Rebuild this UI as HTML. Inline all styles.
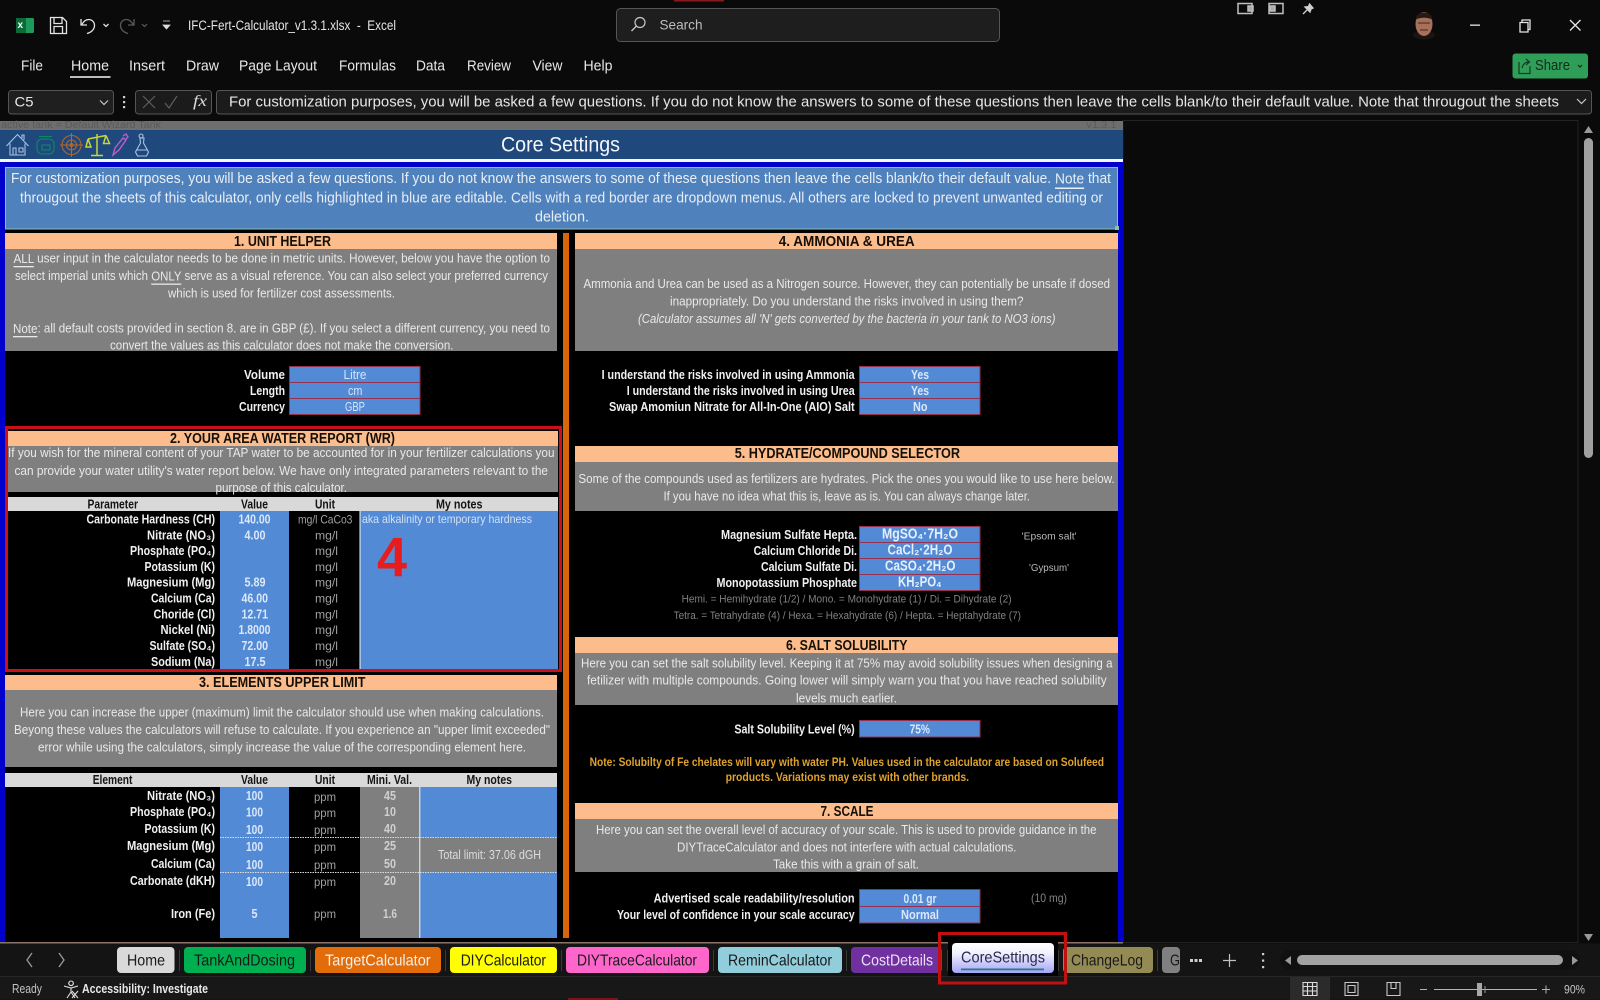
<!DOCTYPE html>
<html><head><meta charset="utf-8"><title>IFC-Fert-Calculator</title>
<style>
html,body{margin:0;padding:0;background:#0a0a0a;width:1600px;height:1000px;overflow:hidden}
svg{display:block;filter:blur(.3px)}
text{font-family:"Liberation Sans",sans-serif;dominant-baseline:central;white-space:pre}
.b{font-size:13px;fill:#e9e9e9}
.i{font-size:15px;fill:#e8eef6}
.h{font-size:14.5px;font-weight:bold;fill:#141008}
.l{font-size:12.5px;font-weight:bold;fill:#f0f0f0}
.v{font-size:12.5px;font-weight:bold;fill:#dce8fa}
.iv{font-size:12.5px;fill:#d4e4fa}
.u{font-size:12px;fill:#a0a0a0}
.m{font-size:12.5px;fill:#d0d0d0;font-weight:bold}
.t{font-size:12.5px;font-weight:bold;fill:#141414}
.f{font-size:14.5px;font-weight:bold;fill:#e6f0fc}
.c{font-size:10.5px;fill:#b8b8b8}
.s{font-size:11px;fill:#808080}
.o{font-size:12px;font-weight:bold;fill:#dfa22c}
.n{font-size:14.5px;fill:#e8e8e8}
.tb{font-size:16px;fill:#1a1a1a}
.in{fill:#538ad6;stroke:#96304f;stroke-width:1}
.ic{fill:none;stroke:#e4e4e4;stroke-width:1.3}
</style></head><body>
<svg width="1600" height="1000" viewBox="0 0 1600 1000" xmlns="http://www.w3.org/2000/svg">
<rect width="1600" height="1000" fill="#0a0a0a"/>
<rect x="674" y="0" width="50" height="1.5" fill="#8a1a1a"/>

<!-- title bar -->
<rect x="16" y="18" width="18" height="15" rx="1.5" fill="#1b9a5a"/>
<rect x="16" y="18" width="10" height="15" fill="#0c6a38"/>
<text x="17.5" y="25.5" style="font-size:10px;font-weight:bold;fill:#fff">x</text>
<path class="ic" d="M50.5 17.5h12l4 4v12h-16zM54 17.5v6h8v-6M54 33.5v-7h8.5v7"/>
<path class="ic" d="M81 19v6h6M81.5 25c2-3.5 4-5.5 7-5.5 3.500 0 6 2.500 6 6s-3 7-7.500 8"/>
<path class="ic" d="M103.500 24l2.500 2.500 2.500-2.500"/>
<path d="M134 19v6h-6M133.500 25c-2-3.500-4-5.500-7-5.500-3.500 0-6 2.500-6 6s3 7 7.500 8" fill="none" stroke="#5a5a5a" stroke-width="1.300"/>
<path d="M142 24l2.500 2.500 2.500-2.500" fill="none" stroke="#5a5a5a" stroke-width="1.200"/>
<path d="M163 21h7M163 25h7l-3.500 4z" fill="#ddd" stroke="#ddd" stroke-width=".8"/>
<text x="188" y="25.500" textLength="208" lengthAdjust="spacingAndGlyphs" style="font-size:13.500px;fill:#e6e6e6">IFC-Fert-Calculator_v1.3.1.xlsx  -  Excel</text>
<rect x="616.500" y="8.500" width="383" height="33" rx="4" fill="#1e1e1e" stroke="#555"/>
<circle cx="640" cy="22.500" r="5" fill="none" stroke="#c8c8c8" stroke-width="1.200"/><path d="M636.500 26l-5 5" stroke="#c8c8c8" stroke-width="1.300"/>
<text x="659.500" y="24.500" textLength="43" lengthAdjust="spacingAndGlyphs" style="font-size:14px;fill:#bdbdbd">Search</text>
<g fill="none" stroke="#c0c0c0" stroke-width="1.500"><rect x="1238" y="3.500" width="14" height="10"/><rect x="1248" y="6" width="5" height="5" fill="#aaa"/><rect x="1269" y="3.500" width="14" height="10"/><rect x="1270" y="6" width="5" height="5" fill="#aaa"/></g>
<path d="M1303 14l4-4M1305 7l5 5 1-3 2-1-3.500-4-1 2.500z" stroke="#cfcfcf" stroke-width="1.300" fill="#cfcfcf"/>
<!-- avatar -->
<ellipse cx="1424" cy="35" rx="11" ry="4.500" fill="#1a1412"/>
<ellipse cx="1424" cy="24" rx="8.500" ry="12" fill="#a87058"/>
<path d="M1415.500 20c0-10 17-10 17 0-3-3-14-3-17 0z" fill="#241a16"/>
<path d="M1418 23h4.500M1425.500 23h4.500M1422.500 23h3M1420 30h8" stroke="#3c2a24" stroke-width="1.100"/>
<rect x="1470" y="24.500" width="10" height="1.300" fill="#e6e6e6"/>
<path class="ic" d="M1520 22.500h8v9.500h-8zM1522 22.500v-2.500h8v9.500h-2"/>
<path d="M1570 20l10.500 10.500M1580.500 20l-10.500 10.500" stroke="#e6e6e6" stroke-width="1.300"/>

<!-- menu -->
<text x="21" y="66.500" textLength="22" lengthAdjust="spacingAndGlyphs" class="n">File</text>
<text x="71" y="66.500" textLength="38" lengthAdjust="spacingAndGlyphs" class="n">Home</text>
<text x="129" y="66.500" textLength="36" lengthAdjust="spacingAndGlyphs" class="n">Insert</text>
<text x="186" y="66.500" textLength="33" lengthAdjust="spacingAndGlyphs" class="n">Draw</text>
<text x="239" y="66.500" textLength="78" lengthAdjust="spacingAndGlyphs" class="n">Page Layout</text>
<text x="339" y="66.500" textLength="57" lengthAdjust="spacingAndGlyphs" class="n">Formulas</text>
<text x="416" y="66.500" textLength="29" lengthAdjust="spacingAndGlyphs" class="n">Data</text>
<text x="467" y="66.500" textLength="44" lengthAdjust="spacingAndGlyphs" class="n">Review</text>
<text x="532.500" y="66.500" textLength="30" lengthAdjust="spacingAndGlyphs" class="n">View</text>
<text x="583.500" y="66.500" textLength="29" lengthAdjust="spacingAndGlyphs" class="n">Help</text>
<rect x="70" y="76" width="40.500" height="2" fill="#bdbdbd"/>
<rect x="1512.500" y="53.500" width="75.500" height="25" rx="3" fill="#2f9e59"/>
<path d="M1519 62v11.500h11V66M1522 68c1-4 3-6 7-6M1526 59l3.500 3-3.500 3" fill="none" stroke="#143c22" stroke-width="1.200"/>
<text x="1535" y="65.500" textLength="35" lengthAdjust="spacingAndGlyphs" style="fill:#102c18;font-size:15px">Share</text>
<path d="M1578 65l2 2 2-2" fill="none" stroke="#102c18" stroke-width="1.200"/>

<!-- formula bar -->
<rect x="8.500" y="90.500" width="105" height="23.500" rx="3" fill="#1f1f1f" stroke="#555"/>
<text x="14.500" y="101.500" textLength="19" lengthAdjust="spacingAndGlyphs" style="font-size:14px;fill:#e8e8e8">C5</text>
<path d="M100 100.500l4 4 4-4" fill="none" stroke="#c8c8c8" stroke-width="1.200"/>
<g fill="#d0d0d0"><rect x="123" y="96" width="2.200" height="2.200"/><rect x="123" y="101" width="2.200" height="2.200"/><rect x="123" y="106" width="2.200" height="2.200"/></g>
<rect x="135.500" y="90.500" width="76" height="23.500" rx="3" fill="#1b1b1b" stroke="#555"/>
<path d="M143 96l12 12M155 96l-12 12M165 103l4 5 8-12" fill="none" stroke="#5e5e5e" stroke-width="1.200"/>
<text x="193" y="101.500" textLength="14" lengthAdjust="spacingAndGlyphs" style="font-family:'Liberation Serif',serif;font-style:italic;font-size:16px;fill:#dcdcdc">fx</text>
<rect x="216.500" y="90.500" width="1375" height="23.500" rx="3" fill="#1b1b1b" stroke="#555"/>
<text x="229" y="102" textLength="1330" lengthAdjust="spacingAndGlyphs" style="font-size:15px;fill:#e6e6e6">For customization purposes, you will be asked a few questions. If you do not know the answers to some of these questions then leave the cells blank/to their default value. Note that througout the sheets</text>
<path d="M1577 99l4.500 4.500 4.500-4.500" fill="none" stroke="#c8c8c8" stroke-width="1.200"/>

<!-- sheet area -->
<rect x="1123" y="120.500" width="455" height="822" fill="#0a0a0a" stroke="#222"/>
<rect x="0" y="121" width="1123" height="821" fill="#000"/>
<rect x="0" y="121" width="1123" height="9" fill="#6e6e6e"/>
<text x="1" y="125.500" textLength="160" lengthAdjust="spacingAndGlyphs" style="font-size:10px;fill:#5a5a5a">active tank = Default Wizard Tank</text>
<text x="1086.500" y="125.500" textLength="30" lengthAdjust="spacingAndGlyphs" style="font-size:10px;fill:#5a5a5a">v1.3.1</text>
<rect x="0" y="130" width="1123" height="29" fill="#1f497d"/>
<rect x="0" y="159" width="1123" height="3" fill="#f4f6fa"/>
<text x="501" y="145" textLength="119" lengthAdjust="spacingAndGlyphs" style="font-size:21px;fill:#f4f6fa">Core Settings</text>
<!-- nav icons -->
<g fill="none" stroke-width="1.100">
<path stroke="#a9c2e0" d="M6.500 146l11-11.500 11 11.500M10 143.500v11.500h15v-11.500M13 155v-7h3v7M19 148h4v4h-4zM22 138v-3h2v5"/>
<rect stroke="#0c8a62" x="37" y="139" width="17" height="15" rx="5"/><path stroke="#0c8a62" d="M39 136.500h13M42 145h8v5h-8z"/>
<circle stroke="#b5662a" cx="71.500" cy="145" r="9.500"/><circle stroke="#b5662a" cx="71.500" cy="145" r="5"/><circle stroke="#b5662a" cx="71.500" cy="145" r="1.500"/><path stroke="#b5662a" d="M71.500 133v24M60 145h23"/>
<path stroke="#c8d43a" stroke-width="1.500" d="M97 134v21M91 155.500h12M88 139l18-3.500M88 139l-2 8h5l-3-8M106 135.500l-2.500 8h6l-3.500-8"/>
<path stroke="#b85ec8" stroke-width="1.400" d="M113 155l2-7 8-10 3 2-7 10-6 5zM123 136l3-2 2 3-2 2"/>
<path stroke="#a9c2e0" d="M140 138h4l-.5 5 5 9-2 4h-9l-2-4 5-9zM137 150h10M141 134a2 2 0 1 0 .1 0"/>
</g>

<!-- frame -->
<rect x="0" y="162" width="1123" height="5" fill="#0000cc"/>
<rect x="0" y="162" width="5" height="780" fill="#0000cc"/>
<rect x="1118" y="162" width="5" height="780" fill="#0000cc"/>
<rect x="563" y="233" width="6" height="705" fill="#d9650a"/>

<rect x="5.500" y="167.500" width="1112" height="61.500" fill="#4f81bd" stroke="#8fc0b8"/>
<rect x="1115" y="226" width="4" height="4" fill="#8fc0b8"/>
<text class="i" x="11" y="178.500" textLength="1100" lengthAdjust="spacingAndGlyphs">For customization purposes, you will be asked a few questions. If you do not know the answers to some of these questions then leave the cells blank/to their default value. <tspan text-decoration="underline">Note</tspan> that</text>
<text class="i" x="20" y="198" textLength="1083" lengthAdjust="spacingAndGlyphs">througout the sheets of this calculator, only cells highlighted in blue are editable. Cells with a red border are dropdown menus. All others are locked to prevent unwanted editing or</text>
<text class="i" x="535" y="217" textLength="54" lengthAdjust="spacingAndGlyphs">deletion.</text>

<!-- Section 1 -->
<rect x="5" y="233" width="552" height="16" fill="#fcbc8c"/>
<rect x="5" y="249" width="552" height="102" fill="#7f7f7f"/>
<text class="h" x="234" y="242" textLength="97" lengthAdjust="spacingAndGlyphs">1. UNIT HELPER</text>
<text class="b" x="13.500" y="258" textLength="536.500" lengthAdjust="spacingAndGlyphs"><tspan text-decoration="underline">ALL</tspan> user input in the calculator needs to be done in metric units. However, below you have the option to</text>
<text class="b" x="15" y="275.500" textLength="533" lengthAdjust="spacingAndGlyphs">select imperial units which <tspan text-decoration="underline">ONLY</tspan> serve as a visual reference. You can also select your preferred currency</text>
<text class="b" x="168" y="293" textLength="227" lengthAdjust="spacingAndGlyphs">which is used for fertilizer cost assessments.</text>
<text class="b" x="13" y="328" textLength="537" lengthAdjust="spacingAndGlyphs"><tspan text-decoration="underline">Note</tspan>: all default costs provided in section 8. are in GBP (£). If you select a different currency, you need to</text>
<text class="b" x="110" y="345" textLength="343.500" lengthAdjust="spacingAndGlyphs">convert the values as this calculator does not make the conversion.</text>
<rect class="in" x="289.500" y="366.500" width="130.500" height="16"/>
<rect class="in" x="289.500" y="382.500" width="130.500" height="16"/>
<rect class="in" x="289.500" y="398.500" width="130.500" height="16"/>
<text class="l" x="244" y="375" textLength="41" lengthAdjust="spacingAndGlyphs">Volume</text>
<text class="l" x="250" y="391" textLength="35" lengthAdjust="spacingAndGlyphs">Length</text>
<text class="l" x="239" y="407" textLength="46" lengthAdjust="spacingAndGlyphs">Currency</text>
<text class="iv" x="343.500" y="375" textLength="23" lengthAdjust="spacingAndGlyphs">Litre</text>
<text class="iv" x="348" y="391" textLength="14.500" lengthAdjust="spacingAndGlyphs">cm</text>
<text class="iv" x="345" y="407" textLength="20" lengthAdjust="spacingAndGlyphs">GBP</text>

<!-- Section 2 -->
<rect x="7" y="431" width="551" height="15" fill="#fcbc8c"/>
<rect x="7" y="446" width="551" height="46" fill="#7f7f7f"/>
<text class="h" x="170" y="439" textLength="225" lengthAdjust="spacingAndGlyphs">2. YOUR AREA WATER REPORT (WR)</text>
<text class="b" x="8" y="452.700" textLength="546.500" lengthAdjust="spacingAndGlyphs">If you wish for the mineral content of your TAP water to be accounted for in your fertilizer calculations you</text>
<text class="b" x="14.500" y="470.500" textLength="533.500" lengthAdjust="spacingAndGlyphs">can provide your water utility's water report below. We have only integrated parameters relevant to the</text>
<text class="b" x="215.500" y="487.500" textLength="131.500" lengthAdjust="spacingAndGlyphs">purpose of this calculator.</text>
<rect x="7" y="497" width="551" height="14" fill="#d9d9d9"/>
<text class="t" x="87.500" y="504.700" textLength="50.500" lengthAdjust="spacingAndGlyphs">Parameter</text>
<text class="t" x="241" y="504.700" textLength="27" lengthAdjust="spacingAndGlyphs">Value</text>
<text class="t" x="315" y="504.700" textLength="20" lengthAdjust="spacingAndGlyphs">Unit</text>
<text class="t" x="436" y="504.700" textLength="46.500" lengthAdjust="spacingAndGlyphs">My notes</text>
<rect x="220" y="511" width="69" height="158" fill="#538ad6"/>
<rect x="360" y="511" width="198" height="158" fill="#538ad6"/>
<rect x="359.500" y="511" width="1" height="158" fill="#f4f4f4"/>
<text class="l" x="86.500" y="519.300" textLength="128.500" lengthAdjust="spacingAndGlyphs">Carbonate Hardness (CH)</text>
<text class="l" x="147" y="535.300" textLength="68" lengthAdjust="spacingAndGlyphs">Nitrate (NO₃)</text>
<text class="l" x="130" y="551" textLength="85" lengthAdjust="spacingAndGlyphs">Phosphate (PO₄)</text>
<text class="l" x="144.500" y="567" textLength="70.500" lengthAdjust="spacingAndGlyphs">Potassium (K)</text>
<text class="l" x="127" y="582.700" textLength="88" lengthAdjust="spacingAndGlyphs">Magnesium (Mg)</text>
<text class="l" x="151" y="598.700" textLength="64" lengthAdjust="spacingAndGlyphs">Calcium (Ca)</text>
<text class="l" x="153.500" y="614.300" textLength="61.500" lengthAdjust="spacingAndGlyphs">Choride (Cl)</text>
<text class="l" x="160.500" y="630" textLength="54.500" lengthAdjust="spacingAndGlyphs">Nickel (Ni)</text>
<text class="l" x="149.500" y="646" textLength="65.500" lengthAdjust="spacingAndGlyphs">Sulfate (SO₄)</text>
<text class="l" x="151" y="662" textLength="64" lengthAdjust="spacingAndGlyphs">Sodium (Na)</text>
<text class="v" x="238.500" y="519.300" textLength="32" lengthAdjust="spacingAndGlyphs">140.00</text>
<text class="v" x="244.500" y="535.300" textLength="21" lengthAdjust="spacingAndGlyphs">4.00</text>
<text class="v" x="244.500" y="582.700" textLength="21" lengthAdjust="spacingAndGlyphs">5.89</text>
<text class="v" x="241.500" y="598.700" textLength="26.500" lengthAdjust="spacingAndGlyphs">46.00</text>
<text class="v" x="241.500" y="614.300" textLength="26.500" lengthAdjust="spacingAndGlyphs">12.71</text>
<text class="v" x="238.500" y="630" textLength="32" lengthAdjust="spacingAndGlyphs">1.8000</text>
<text class="v" x="241.500" y="646" textLength="26.500" lengthAdjust="spacingAndGlyphs">72.00</text>
<text class="v" x="244.500" y="662" textLength="21" lengthAdjust="spacingAndGlyphs">17.5</text>
<text class="u" x="298" y="519.300" textLength="54.400" lengthAdjust="spacingAndGlyphs">mg/l CaCo3</text>
<text class="u" x="315" y="535.300" textLength="23" lengthAdjust="spacingAndGlyphs">mg/l</text>
<text class="u" x="315" y="551" textLength="23" lengthAdjust="spacingAndGlyphs">mg/l</text>
<text class="u" x="315" y="567" textLength="23" lengthAdjust="spacingAndGlyphs">mg/l</text>
<text class="u" x="315" y="582.700" textLength="23" lengthAdjust="spacingAndGlyphs">mg/l</text>
<text class="u" x="315" y="598.700" textLength="23" lengthAdjust="spacingAndGlyphs">mg/l</text>
<text class="u" x="315" y="614.300" textLength="23" lengthAdjust="spacingAndGlyphs">mg/l</text>
<text class="u" x="315" y="630" textLength="23" lengthAdjust="spacingAndGlyphs">mg/l</text>
<text class="u" x="315" y="646" textLength="23" lengthAdjust="spacingAndGlyphs">mg/l</text>
<text class="u" x="315" y="662" textLength="23" lengthAdjust="spacingAndGlyphs">mg/l</text>
<text x="362" y="519" textLength="170" lengthAdjust="spacingAndGlyphs" style="font-size:12px;fill:#d0e0f6">aka alkalinity or temporary hardness</text>
<text x="377" y="557" textLength="30" lengthAdjust="spacingAndGlyphs" style="font-size:56px;font-weight:bold;fill:#e81c1c">4</text>
<rect x="6.500" y="427.500" width="554" height="243" fill="none" stroke="#cc1018" stroke-width="3"/>

<!-- Section 3 -->
<rect x="5" y="675" width="552" height="15" fill="#fcbc8c"/>
<rect x="5" y="690" width="552" height="77" fill="#7f7f7f"/>
<text class="h" x="199" y="683" textLength="166.500" lengthAdjust="spacingAndGlyphs">3. ELEMENTS UPPER LIMIT</text>
<text class="b" x="20" y="712" textLength="524" lengthAdjust="spacingAndGlyphs">Here you can increase the upper (maximum) limit the calculator should use when making calculations.</text>
<text class="b" x="14" y="729.700" textLength="536" lengthAdjust="spacingAndGlyphs">Beyong these values the calculators will refuse to calculate. If you experience an "upper limit exceeded"</text>
<text class="b" x="38" y="747" textLength="488" lengthAdjust="spacingAndGlyphs">error while using the calculators, simply increase the value of the corresponding element here.</text>
<rect x="5" y="773" width="552" height="14" fill="#d9d9d9"/>
<text class="t" x="92.700" y="780" textLength="39.700" lengthAdjust="spacingAndGlyphs">Element</text>
<text class="t" x="241" y="780" textLength="27" lengthAdjust="spacingAndGlyphs">Value</text>
<text class="t" x="315" y="780" textLength="20" lengthAdjust="spacingAndGlyphs">Unit</text>
<text class="t" x="367" y="780" textLength="45" lengthAdjust="spacingAndGlyphs">Mini. Val.</text>
<text class="t" x="466.500" y="780" textLength="45.500" lengthAdjust="spacingAndGlyphs">My notes</text>
<rect x="220" y="787" width="69" height="151" fill="#538ad6"/>
<rect x="360" y="787" width="60" height="151" fill="#7f7f7f"/>
<rect x="420" y="787" width="137" height="151" fill="#538ad6"/>
<rect x="420" y="837" width="137" height="35" fill="#7f7f7f"/>
<rect x="419.300" y="787" width="1" height="151" fill="#f4f4f4"/>
<path d="M220 837.500H557M220 872.500H557" stroke="#dcdcdc" stroke-width="1" stroke-dasharray="1.500 1"/>
<text class="l" x="147" y="796" textLength="68" lengthAdjust="spacingAndGlyphs">Nitrate (NO₃)</text>
<text class="l" x="130" y="812" textLength="85" lengthAdjust="spacingAndGlyphs">Phosphate (PO₄)</text>
<text class="l" x="144.500" y="829" textLength="70.500" lengthAdjust="spacingAndGlyphs">Potassium (K)</text>
<text class="l" x="127" y="846" textLength="88" lengthAdjust="spacingAndGlyphs">Magnesium (Mg)</text>
<text class="l" x="151" y="864" textLength="64" lengthAdjust="spacingAndGlyphs">Calcium (Ca)</text>
<text class="l" x="130" y="881" textLength="85" lengthAdjust="spacingAndGlyphs">Carbonate (dKH)</text>
<text class="l" x="171" y="914" textLength="44" lengthAdjust="spacingAndGlyphs">Iron (Fe)</text>
<text class="v" x="246" y="796" textLength="17" lengthAdjust="spacingAndGlyphs">100</text>
<text class="v" x="246" y="812.500" textLength="17" lengthAdjust="spacingAndGlyphs">100</text>
<text class="v" x="246" y="830" textLength="17" lengthAdjust="spacingAndGlyphs">100</text>
<text class="v" x="246" y="847" textLength="17" lengthAdjust="spacingAndGlyphs">100</text>
<text class="v" x="246" y="865" textLength="17" lengthAdjust="spacingAndGlyphs">100</text>
<text class="v" x="246" y="882" textLength="17" lengthAdjust="spacingAndGlyphs">100</text>
<text class="v" x="251.500" y="914" textLength="6" lengthAdjust="spacingAndGlyphs">5</text>
<text class="u" x="314" y="797" textLength="22" lengthAdjust="spacingAndGlyphs">ppm</text>
<text class="u" x="314" y="813" textLength="22" lengthAdjust="spacingAndGlyphs">ppm</text>
<text class="u" x="314" y="830" textLength="22" lengthAdjust="spacingAndGlyphs">ppm</text>
<text class="u" x="314" y="847" textLength="22" lengthAdjust="spacingAndGlyphs">ppm</text>
<text class="u" x="314" y="865" textLength="22" lengthAdjust="spacingAndGlyphs">ppm</text>
<text class="u" x="314" y="882" textLength="22" lengthAdjust="spacingAndGlyphs">ppm</text>
<text class="u" x="314" y="914" textLength="22" lengthAdjust="spacingAndGlyphs">ppm</text>
<text class="m" x="384" y="796" textLength="12" lengthAdjust="spacingAndGlyphs">45</text>
<text class="m" x="384" y="812" textLength="12" lengthAdjust="spacingAndGlyphs">10</text>
<text class="m" x="384" y="829" textLength="12" lengthAdjust="spacingAndGlyphs">40</text>
<text class="m" x="384" y="846" textLength="12" lengthAdjust="spacingAndGlyphs">25</text>
<text class="m" x="384" y="864" textLength="12" lengthAdjust="spacingAndGlyphs">50</text>
<text class="m" x="384" y="881" textLength="12" lengthAdjust="spacingAndGlyphs">20</text>
<text class="m" x="383" y="914" textLength="14" lengthAdjust="spacingAndGlyphs">1.6</text>
<text x="438" y="855" textLength="103" lengthAdjust="spacingAndGlyphs" style="font-size:12.500px;fill:#dcdcdc">Total limit: 37.06 dGH</text>

<!-- Section 4 -->
<rect x="575" y="233" width="543" height="16" fill="#fcbc8c"/>
<rect x="575" y="249" width="543" height="102" fill="#7f7f7f"/>
<text class="h" x="778.700" y="242" textLength="136" lengthAdjust="spacingAndGlyphs">4. AMMONIA &amp; UREA</text>
<text class="b" x="583.500" y="283.700" textLength="526.500" lengthAdjust="spacingAndGlyphs">Ammonia and Urea can be used as a Nitrogen source. However, they can potentially be unsafe if dosed</text>
<text class="b" x="670" y="301" textLength="353.500" lengthAdjust="spacingAndGlyphs">inappropriately. Do you understand the risks involved in using them?</text>
<text class="b" x="638" y="318.700" textLength="417.500" lengthAdjust="spacingAndGlyphs" font-style="italic">(Calculator assumes all 'N' gets converted by the bacteria in your tank to NO3 ions)</text>
<rect class="in" x="859.500" y="366.500" width="120.500" height="16"/>
<rect class="in" x="859.500" y="382.500" width="120.500" height="16"/>
<rect class="in" x="859.500" y="398.500" width="120.500" height="16"/>
<text class="l" x="601.600" y="375" textLength="253" lengthAdjust="spacingAndGlyphs">I understand the risks involved in using Ammonia</text>
<text class="l" x="626.700" y="391" textLength="228" lengthAdjust="spacingAndGlyphs">I understand the risks involved in using Urea</text>
<text class="l" x="609" y="407" textLength="245.700" lengthAdjust="spacingAndGlyphs">Swap Amomiun Nitrate for All-In-One (AIO) Salt</text>
<text class="v" x="911" y="375" textLength="18" lengthAdjust="spacingAndGlyphs">Yes</text>
<text class="v" x="911" y="391" textLength="18" lengthAdjust="spacingAndGlyphs">Yes</text>
<text class="v" x="913" y="407" textLength="14.500" lengthAdjust="spacingAndGlyphs">No</text>

<!-- Section 5 -->
<rect x="575" y="446" width="543" height="16" fill="#fcbc8c"/>
<rect x="575" y="462" width="543" height="49" fill="#7f7f7f"/>
<text class="h" x="734.700" y="454" textLength="225.300" lengthAdjust="spacingAndGlyphs">5. HYDRATE/COMPOUND SELECTOR</text>
<text class="b" x="578.400" y="478.700" textLength="536.300" lengthAdjust="spacingAndGlyphs">Some of the compounds used as fertilizers are hydrates. Pick the ones you would like to use here below.</text>
<text class="b" x="663.500" y="496" textLength="366.500" lengthAdjust="spacingAndGlyphs">If you have no idea what this is, leave as is. You can always change later.</text>
<rect class="in" x="859.500" y="526.500" width="120.500" height="16"/>
<rect class="in" x="859.500" y="542.500" width="120.500" height="16"/>
<rect class="in" x="859.500" y="558.500" width="120.500" height="16"/>
<rect class="in" x="859.500" y="574.500" width="120.500" height="16"/>
<text class="l" x="721" y="535" textLength="136" lengthAdjust="spacingAndGlyphs">Magnesium Sulfate Hepta.</text>
<text class="l" x="753.600" y="551" textLength="103.400" lengthAdjust="spacingAndGlyphs">Calcium Chloride Di.</text>
<text class="l" x="761" y="567" textLength="96" lengthAdjust="spacingAndGlyphs">Calcium Sulfate Di.</text>
<text class="l" x="716.500" y="583" textLength="140.500" lengthAdjust="spacingAndGlyphs">Monopotassium Phosphate</text>
<text class="f" x="882" y="534.500" textLength="76" lengthAdjust="spacingAndGlyphs">MgSO₄·7H₂O</text>
<text class="f" x="887.500" y="550.500" textLength="65" lengthAdjust="spacingAndGlyphs">CaCl₂·2H₂O</text>
<text class="f" x="885" y="566.500" textLength="70.500" lengthAdjust="spacingAndGlyphs">CaSO₄·2H₂O</text>
<text class="f" x="898" y="582.500" textLength="43.600" lengthAdjust="spacingAndGlyphs">KH₂PO₄</text>
<text class="c" x="1021.600" y="536.500" textLength="55" lengthAdjust="spacingAndGlyphs">'Epsom salt'</text>
<text class="c" x="1029" y="568" textLength="40" lengthAdjust="spacingAndGlyphs">'Gypsum'</text>
<text class="s" x="681.600" y="599.700" textLength="330" lengthAdjust="spacingAndGlyphs">Hemi. = Hemihydrate (1/2) / Mono. = Monohydrate (1) / Di. = Dihydrate (2)</text>
<text class="s" x="673.600" y="616" textLength="347.400" lengthAdjust="spacingAndGlyphs">Tetra. = Tetrahydrate (4) / Hexa. = Hexahydrate (6) / Hepta. = Heptahydrate (7)</text>

<!-- Section 6 -->
<rect x="575" y="637" width="543" height="16" fill="#fcbc8c"/>
<rect x="575" y="653" width="543" height="52" fill="#7f7f7f"/>
<text class="h" x="786" y="646" textLength="121.500" lengthAdjust="spacingAndGlyphs">6. SALT SOLUBILITY</text>
<text class="b" x="581" y="663" textLength="531.500" lengthAdjust="spacingAndGlyphs">Here you can set the salt solubility level. Keeping it at 75% may avoid solubility issues when designing a</text>
<text class="b" x="587" y="680" textLength="519.700" lengthAdjust="spacingAndGlyphs">fetilizer with multiple compounds. Going lower will simply warn you that you have reached solubility</text>
<text class="b" x="796" y="698" textLength="101" lengthAdjust="spacingAndGlyphs">levels much earlier.</text>
<rect class="in" x="859.500" y="720.500" width="120.500" height="16.500"/>
<text class="l" x="734.400" y="729.500" textLength="120.300" lengthAdjust="spacingAndGlyphs">Salt Solubility Level (%)</text>
<text class="v" x="909.600" y="729.500" textLength="20.400" lengthAdjust="spacingAndGlyphs">75%</text>
<text class="o" x="589.600" y="762" textLength="514.400" lengthAdjust="spacingAndGlyphs">Note: Solubilty of Fe chelates will vary with water PH. Values used in the calculator are based on Solufeed</text>
<text class="o" x="725.600" y="777" textLength="243.400" lengthAdjust="spacingAndGlyphs">products. Variations may exist with other brands.</text>

<!-- Section 7 -->
<rect x="575" y="803" width="543" height="16" fill="#fcbc8c"/>
<rect x="575" y="819" width="543" height="53" fill="#7f7f7f"/>
<text class="h" x="820.500" y="812" textLength="53" lengthAdjust="spacingAndGlyphs">7. SCALE</text>
<text class="b" x="596" y="829.500" textLength="500.500" lengthAdjust="spacingAndGlyphs">Here you can set the overall level of accuracy of your scale. This is used to provide guidance in the</text>
<text class="b" x="677" y="847" textLength="339.500" lengthAdjust="spacingAndGlyphs">DIYTraceCalculator and does not interfere with actual calculations.</text>
<text class="b" x="773" y="864" textLength="146" lengthAdjust="spacingAndGlyphs">Take this with a grain of salt.</text>
<rect class="in" x="859.500" y="889.500" width="120.500" height="17"/>
<rect class="in" x="859.500" y="906.500" width="120.500" height="16.500"/>
<text class="l" x="653.600" y="898.700" textLength="201" lengthAdjust="spacingAndGlyphs">Advertised scale readability/resolution</text>
<text class="l" x="617" y="915" textLength="237.700" lengthAdjust="spacingAndGlyphs">Your level of confidence in your scale accuracy</text>
<text class="v" x="903.500" y="899" textLength="33" lengthAdjust="spacingAndGlyphs">0.01 gr</text>
<text class="v" x="901" y="915" textLength="38" lengthAdjust="spacingAndGlyphs">Normal</text>
<text x="1031" y="898" textLength="36" lengthAdjust="spacingAndGlyphs" style="font-size:12px;fill:#858585">(10 mg)</text>

<!-- vertical scrollbar -->
<path d="M1588.500 126l4.500 7h-9z" fill="#999"/>
<rect x="1584" y="138" width="9" height="320" rx="4.500" fill="#a0a0a0"/>
<path d="M1588.500 941l4.500-7h-9z" fill="#999"/>

<!-- tab bar -->
<rect x="0" y="942" width="1123" height="1.500" fill="#8a7468"/>
<rect x="0" y="943.500" width="1600" height="33" fill="#141414"/>
<path d="M32 953l-5 7 5 7M59 953l5 7-5 7" fill="none" stroke="#9a9a9a" stroke-width="1.300"/>
<g stroke="#3a3a3a"><path d="M179.500 950v21M310.500 950v21M445.500 950v21M561.500 950v21M713.500 950v21M846.500 950v21M947.500 950v21M1058.500 950v21M1157.500 950v21"/></g>
<rect x="117" y="947" width="57.500" height="26" rx="4" fill="#d9d9d9"/>
<text class="tb" x="127" y="961" textLength="38" lengthAdjust="spacingAndGlyphs">Home</text>
<rect x="184" y="947" width="122" height="26" rx="4" fill="#00b050"/>
<text class="tb" x="194" y="961" textLength="101" lengthAdjust="spacingAndGlyphs">TankAndDosing</text>
<rect x="315" y="947" width="126" height="26" rx="4" fill="#e26b0a"/>
<text class="tb" x="325" y="961" textLength="105.600" lengthAdjust="spacingAndGlyphs" style="fill:#f4f0e8">TargetCalculator</text>
<rect x="450" y="947" width="107" height="26" rx="4" fill="#ffff00"/>
<text class="tb" x="460.700" y="961" textLength="85.300" lengthAdjust="spacingAndGlyphs">DIYCalculator</text>
<rect x="566" y="947" width="143" height="26" rx="4" fill="#ff66cc"/>
<text class="tb" x="577" y="961" textLength="120" lengthAdjust="spacingAndGlyphs">DIYTraceCalculator</text>
<rect x="718" y="947" width="124" height="26" rx="4" fill="#92cddc"/>
<text class="tb" x="728" y="961" textLength="104" lengthAdjust="spacingAndGlyphs">ReminCalculator</text>
<rect x="851" y="947" width="91" height="26" rx="4" fill="#7030a0"/>
<text class="tb" x="861" y="961" textLength="72" lengthAdjust="spacingAndGlyphs" style="fill:#ece0f4">CostDetails</text>
<defs><linearGradient id="cs" x1="0" y1="0" x2="0" y2="1"><stop offset="0" stop-color="#ffffff"/><stop offset=".35" stop-color="#f0f0ff"/><stop offset="1" stop-color="#a4a4f8"/></linearGradient></defs>
<rect x="948" y="942" width="110" height="34" fill="#000"/>
<rect x="952" y="943" width="102" height="30" rx="4" fill="url(#cs)"/>
<text class="tb" x="961" y="958" textLength="84" lengthAdjust="spacingAndGlyphs" style="fill:#2a2a48">CoreSettings</text>
<rect x="961" y="968.500" width="83" height="1.800" fill="#2e7a80"/>
<rect x="1063" y="947" width="90" height="26" rx="4" fill="#948a54"/>
<text class="tb" x="1071" y="961" textLength="72" lengthAdjust="spacingAndGlyphs">ChangeLog</text>
<rect x="1162" y="947" width="18" height="26" rx="4" fill="#808080"/>
<text class="tb" x="1170" y="961" textLength="10" lengthAdjust="spacingAndGlyphs">G</text>
<rect x="1180" y="944" width="10" height="32" fill="#141414"/>
<g fill="#cfcfcf"><rect x="1190" y="959" width="3" height="3"/><rect x="1194.500" y="959" width="3" height="3"/><rect x="1199" y="959" width="3" height="3"/></g>
<path d="M1229.500 954v13M1223 960.500h13" stroke="#c0c0c0" stroke-width="1.200"/>
<g fill="#cfcfcf"><rect x="1262" y="953" width="2.200" height="2.200"/><rect x="1262" y="959.500" width="2.200" height="2.200"/><rect x="1262" y="966" width="2.200" height="2.200"/></g>
<rect x="1280" y="950" width="300" height="20" rx="10" fill="#101010"/>
<path d="M1291 956l-6 4.500 6 4.500zM1572 956l6 4.500-6 4.500z" fill="#999"/>
<rect x="1297" y="955" width="266" height="10" rx="5" fill="#a0a0a0"/>

<!-- status bar -->
<rect x="0" y="976" width="1600" height="24" fill="#181818"/>
<rect x="0" y="976" width="1600" height="1" fill="#262626"/>
<rect x="0" y="999" width="1600" height="1" fill="#201010"/>
<rect x="568" y="998" width="50" height="2" fill="#7a1515"/>
<text x="12" y="989" textLength="30" lengthAdjust="spacingAndGlyphs" style="font-size:12.500px;fill:#c4c4c4">Ready</text>
<path d="M71 981a2.300 2.300 0 1 0 .1 0M64 986l7 2 7-2M71 988v4l-4 6M71 992l4 6M72 991l6 7M78 991l-6 7" fill="none" stroke="#e0e0e0" stroke-width="1.100"/>
<text x="82" y="989" textLength="126" lengthAdjust="spacingAndGlyphs" style="font-size:12.500px;font-weight:bold;fill:#e8e8e8">Accessibility: Investigate</text>
<rect x="1290" y="977" width="40" height="23" fill="#2b2b2b"/>
<path d="M1303 982.500h14v13h-14zM1303 986.500h14M1303 991h14M1307.500 982.500v13M1312.500 982.500v13" fill="none" stroke="#dcdcdc" stroke-width="1.100"/>
<path d="M1345 982.500h13v13h-13zM1348 985.500h7v7h-7z" fill="none" stroke="#c8c8c8" stroke-width="1.100"/>
<path d="M1387 982.500h13v13h-13zM1391 982.500v6h5v-6" fill="none" stroke="#c8c8c8" stroke-width="1.100"/>
<path d="M1420 989.500h7M1434 989.500h103M1546 985.500v8M1542 989.500h8" stroke="#b4b4b4" stroke-width="1"/>
<rect x="1477" y="983" width="5" height="13" fill="#a8a8a8"/>
<path d="M1485 986v7" stroke="#999"/>
<text x="1564" y="989.500" textLength="21" lengthAdjust="spacingAndGlyphs" style="font-size:12px;fill:#c4c4c4">90%</text>

<!-- selection highlight red box, drawn over tab and status bars -->
<rect x="939.500" y="933.500" width="126" height="49.500" fill="none" stroke="#c01010" stroke-width="3"/>
</svg>
</body></html>
